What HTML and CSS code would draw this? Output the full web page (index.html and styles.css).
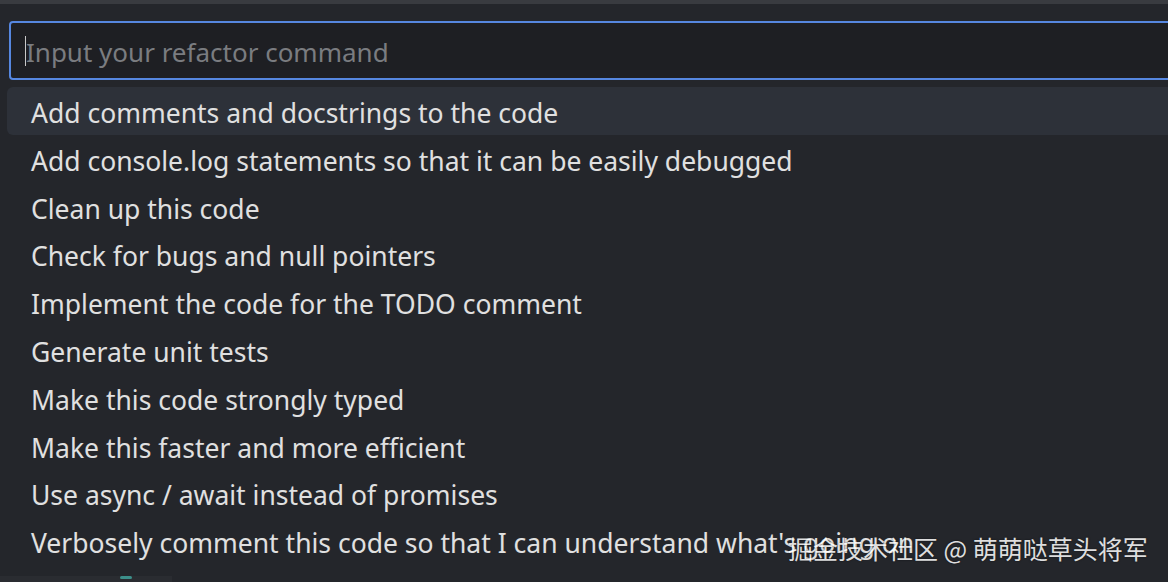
FILE: index.html
```html
<!DOCTYPE html>
<html>
<head>
<meta charset="utf-8">
<link rel="stylesheet" href="styles.css">
</head>
<body>
<div class="topbar"></div>
<div class="panel">
  <div class="input"><span class="caret"></span><span class="placeholder">Input your refactor command</span></div>
  <ul class="list">
    <li class="item selected">Add comments and docstrings to the code</li>
    <li class="item">Add console.log statements so that it can be easily debugged</li>
    <li class="item">Clean up this code</li>
    <li class="item">Check for bugs and null pointers</li>
    <li class="item">Implement the code for the TODO comment</li>
    <li class="item">Generate unit tests</li>
    <li class="item">Make this code strongly typed</li>
    <li class="item">Make this faster and more efficient</li>
    <li class="item">Use async / await instead of promises</li>
    <li class="item">Verbosely comment this code so that I can understand what's going on</li>
  </ul>
</div>
<div class="bottom"><span class="bottom-left"></span><span class="glyph"></span></div>
<div class="watermark">掘金技术社区 @ 萌萌哒草头将军</div>
</body>
</html>
```
FILE: styles.css
```css
html, body {
  margin: 0;
  padding: 0;
  width: 1168px;
  height: 582px;
  overflow: hidden;
  background: #24262b;
  font-family: "Noto Sans", "Open Sans", sans-serif;
  position: relative;
}
.topbar {
  height: 4px;
  background: #393b40;
}
.panel {
  padding: 17px 0 0 7px;
}
.input {
  margin-left: 2px;
  margin-right: -20px;
  height: 55px;
  border: 2px solid #5687e0;
  border-radius: 4px;
  background: #1e1f23;
  display: flex;
  align-items: center;
  padding-left: 14px;
}
.caret {
  width: 1px;
  height: 30px;
  background: #c8c8c8;
}
.placeholder {
  color: #7a7c80;
  font-size: 26px;
  white-space: nowrap;
  padding-top: 2px;
}
.list {
  list-style: none;
  margin: 7px -20px 0 0;
  padding: 0;
}
.item {
  height: 47.8px;
  line-height: 52px;
  padding-left: 24px;
  color: #e0e0e0;
  font-size: 26.5px;
  white-space: nowrap;
  border-radius: 6px;
  overflow: hidden;
}
.item.selected {
  background: #2d3139;
}
.bottom {
  position: absolute;
  left: 0;
  bottom: 0;
  width: 180px;
  height: 8px;
}
.bottom-left {
  position: absolute;
  left: 0;
  bottom: 0;
  width: 172px;
  height: 6px;
  background: #2a2c31;
}
.glyph {
  position: absolute;
  left: 120px;
  bottom: 3px;
  width: 12px;
  height: 3px;
  border-radius: 2px;
  background: #3c8f8a;
}
.watermark {
  position: absolute;
  left: 788px;
  top: 530px;
  font-family: "Noto Sans CJK SC", sans-serif;
  font-size: 25px;
  color: #ffffff;
  opacity: 0.85;
  text-shadow: 0 0 2px rgba(0,0,0,0.6);
  white-space: nowrap;
}
```
